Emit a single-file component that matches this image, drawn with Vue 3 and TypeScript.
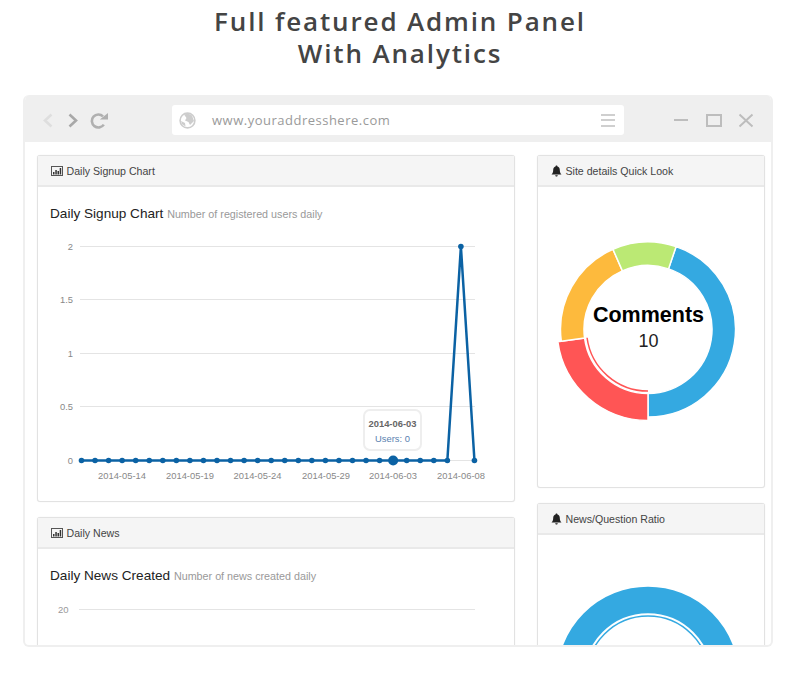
<template>
  <div class="page">
    <h1 class="title">Full featured Admin Panel<br />With Analytics</h1>

    <div class="browser">
      <div class="toolbar">
        <div class="nav">
          <svg width="14" height="18" viewBox="0 0 14 18"><path d="M11.500 3.500 L5 9.500 L11.500 15.500" fill="none" stroke="#dedede" stroke-width="2.600" /></svg>
          <svg width="14" height="18" viewBox="0 0 14 18"><path d="M3.500 3.500 L10 9.500 L3.500 15.500" fill="none" stroke="#a8a8a8" stroke-width="2.600" /></svg>
          <svg class="reload" width="20" height="18" viewBox="0 0 20 18">
            <path d="M14.800 13.600 A6.500 6.500 0 1 1 14 5.400" fill="none" stroke="#b0b0b0" stroke-width="2.600" />
            <path d="M10.800 8.600 L19 8.600 L19 2 Z" fill="#b0b0b0" />
          </svg>
        </div>
        <div class="address">
          <svg class="globe" width="17" height="17" viewBox="0 0 17 17">
            <circle cx="8.500" cy="8.500" r="7.400" fill="#fff" stroke="#cdcdcd" stroke-width="1.600" />
            <path d="M5 2.500 L9 1.500 L13 3.500 L15 9 L11 13 L9.500 10 L6 8.500 L7.500 6 Z" fill="#cdcdcd" />
            <path d="M2 9 L6 11 L6.500 14.500 L3 12 Z" fill="#cdcdcd" />
          </svg>
          <span class="url">www.youraddresshere.com</span>
          <div class="burger"><i></i><i></i><i></i></div>
        </div>
        <div class="window-btns">
          <svg width="16" height="16" viewBox="0 0 16 16"><path d="M0 8 H14" stroke="#bdbdbd" stroke-width="2" /></svg>
          <svg width="16" height="16" viewBox="0 0 16 16"><rect x="1" y="3" width="14" height="11" fill="none" stroke="#bdbdbd" stroke-width="2" /></svg>
          <svg width="16" height="16" viewBox="0 0 16 16"><path d="M1.500 2.500 L14.500 14.500 M14.500 2.500 L1.500 14.500" stroke="#bdbdbd" stroke-width="2" /></svg>
        </div>
      </div>

      <div class="content">
        <div class="col-left">
          <section class="panel panel-signup">
            <header class="panel-head">
              <svg class="ico" width="12" height="10" viewBox="0 0 12 10">
                <rect x="0.500" y="0.500" width="11" height="9" fill="none" stroke="#555" />
                <path d="M2 6h1.500v2.500h-1.500zM4.300 4h1.500v4.500h-1.500zM6.500 5h1.500v3.500h-1.500zM8.700 2h1.500v6.500h-1.500z" fill="#333" />
              </svg>
              Daily Signup Chart
            </header>
            <div class="panel-body">
              <div class="chart-title">Daily Signup Chart <small>Number of registered users daily</small></div>
              <svg class="chart" width="476" height="270" viewBox="0 0 476 270">
                <g v-for="g in gridLines" :key="g.label">
                  <line x1="42" x2="437" :y1="g.y" :y2="g.y" stroke="#e4e4e4" stroke-width="1.200" />
                  <text x="35" :y="g.y + 3.500" text-anchor="end" class="axis">{{ g.label }}</text>
                </g>
                <text v-for="d in dateLabels" :key="d.label" :x="d.x" y="259" text-anchor="middle" class="axis">{{ d.label }}</text>
                <polyline :points="linePoints" fill="none" stroke="#0b62a4" stroke-width="2.500" />
                <circle v-for="(p, i) in points" :key="i" :cx="p.x" :cy="p.y" :r="i === hoverIndex ? 5 : 2.800" fill="#0b62a4" />
              </svg>
              <div class="hover-tip">
                <b>2014-06-03</b>
                <span>Users: 0</span>
              </div>
            </div>
          </section>

          <section class="panel panel-news">
            <header class="panel-head">
              <svg class="ico" width="12" height="10" viewBox="0 0 12 10">
                <rect x="0.500" y="0.500" width="11" height="9" fill="none" stroke="#555" />
                <path d="M2 6h1.500v2.500h-1.500zM4.300 4h1.500v4.500h-1.500zM6.500 5h1.500v3.500h-1.500zM8.700 2h1.500v6.500h-1.500z" fill="#333" />
              </svg>
              Daily News
            </header>
            <div class="panel-body">
              <div class="chart-title">Daily News Created <small>Number of news created daily</small></div>
              <div class="news-grid">
                <span>20</span>
                <i></i>
              </div>
            </div>
          </section>
        </div>

        <div class="col-right">
          <section class="panel panel-donut">
            <header class="panel-head">
              <svg class="ico" width="11" height="12" viewBox="0 0 11 12">
                <path d="M5.500 0.500C6.200 0.500 6.500 1 6.500 1.500C8 2 8.800 3.200 8.800 5C8.800 7.500 9.500 8.500 10.500 9.500H0.500C1.500 8.500 2.200 7.500 2.200 5C2.200 3.200 3 2 4.500 1.500C4.500 1 4.800 0.500 5.500 0.500Z M4.200 10.200H6.800C6.700 11 6.200 11.500 5.500 11.500C4.800 11.500 4.300 11 4.200 10.200Z" fill="#222" />
              </svg>
              Site details Quick Look
            </header>
            <div class="donut-body">
              <svg width="226" height="270" viewBox="0 0 226 270">
                <path v-for="s in segments" :key="s.color" :d="s.d" :fill="s.color" stroke="#fff" stroke-width="1.500" />
                <path :d="redInner" fill="none" stroke="#ff5555" stroke-width="1.500" />
                <text x="110.500" y="135" text-anchor="middle" class="donut-label">Comments</text>
                <text x="110.500" y="160" text-anchor="middle" class="donut-value">10</text>
              </svg>
            </div>
          </section>

          <section class="panel panel-ratio">
            <header class="panel-head">
              <svg class="ico" width="11" height="12" viewBox="0 0 11 12">
                <path d="M5.500 0.500C6.200 0.500 6.500 1 6.500 1.500C8 2 8.800 3.200 8.800 5C8.800 7.500 9.500 8.500 10.500 9.500H0.500C1.500 8.500 2.200 7.500 2.200 5C2.200 3.200 3 2 4.500 1.500C4.500 1 4.800 0.500 5.500 0.500Z M4.200 10.200H6.800C6.700 11 6.200 11.500 5.500 11.500C4.800 11.500 4.300 11 4.200 10.200Z" fill="#222" />
              </svg>
              News/Question Ratio
            </header>
            <div class="ratio-body">
              <svg width="226" height="130" viewBox="0 0 226 130">
                <circle cx="110" cy="142.500" r="77.500" fill="none" stroke="#34a9e1" stroke-width="26.500" />
                <circle cx="110" cy="142.500" r="61.500" fill="none" stroke="#34a9e1" stroke-width="1.500" />
              </svg>
            </div>
          </section>
        </div>
      </div>
    </div>
  </div>
</template>

<script setup lang="ts">
const gridLines = [
  { label: '2', y: 26.5 },
  { label: '1.5', y: 79.5 },
  { label: '1', y: 133.5 },
  { label: '0.5', y: 186.5 },
  { label: '0', y: 240.5 }
]

// 30 daily points, only the second to last day has signups
const points = Array.from({ length: 30 }, (_, i) => ({
  x: 43.5 + i * 13.55,
  y: i === 28 ? 26.5 : 240.5
}))
const hoverIndex = 23
const linePoints = points.map((p) => `${p.x},${p.y}`).join(' ')

const dateLabels = [
  { label: '2014-05-14', x: 84 },
  { label: '2014-05-19', x: 152 },
  { label: '2014-05-24', x: 219.5 },
  { label: '2014-05-29', x: 288 },
  { label: '2014-06-03', x: 355 },
  { label: '2014-06-08', x: 423 }
]

const polar = (cx: number, cy: number, r: number, deg: number) => {
  const a = ((deg - 90) * Math.PI) / 180
  return `${(cx + r * Math.cos(a)).toFixed(2)} ${(cy + r * Math.sin(a)).toFixed(2)}`
}

const arc = (cx: number, cy: number, r0: number, r1: number, from: number, to: number) => {
  const large = to - from > 180 ? 1 : 0
  return `M${polar(cx, cy, r1, from)} A${r1} ${r1} 0 ${large} 1 ${polar(cx, cy, r1, to)} L${polar(cx, cy, r0, to)} A${r0} ${r0} 0 ${large} 0 ${polar(cx, cy, r0, from)} Z`
}

const cx = 110
const cy = 142.5
const segments = [
  { color: '#34a9e1', d: arc(cx, cy, 64, 87.5, 18.7, 180) },
  { color: '#ff5555', d: arc(cx, cy, 64, 91, 180, 262.3) },
  { color: '#fdba3d', d: arc(cx, cy, 64, 87.5, 262.3, 336.4) },
  { color: '#bbe974', d: arc(cx, cy, 64, 87.5, 336.4, 378.7) }
]

const redInner = `M${polar(cx, cy, 61.5, 180)} A61.5 61.5 0 0 1 ${polar(cx, cy, 61.5, 262.3)}`
</script>

<style>
body {
  margin: 0;
  background: #fff;
}
</style>

<style scoped>
.page {
  width: 800px;
  height: 700px;
  overflow: hidden;
  background: #fff;
  font-family: "Liberation Sans", Arial, sans-serif;
}

.title {
  margin: 0;
  padding-top: 5px;
  height: 95px;
  box-sizing: border-box;
  text-align: center;
  font-family: "Open Sans", sans-serif;
  font-size: 26px;
  font-weight: 600;
  line-height: 32px;
  letter-spacing: 1.85px;
  color: #444;
}

.browser {
  margin-left: 23px;
  width: 750px;
  height: 552px;
  box-sizing: border-box;
  border: 2px solid #efefef;
  border-top: 0;
  border-radius: 6px;
  overflow: hidden;
}

.toolbar {
  height: 47px;
  margin: 0 -2px;
  background: #efefef;
  display: flex;
  align-items: center;
  padding-left: 17px;
}

.nav {
  width: 132px;
  margin-top: 3px;
  display: flex;
  align-items: center;
  gap: 12px;
}

.reload {
  margin-left: -3px;
}

.address {
  width: 452px;
  height: 30px;
  margin-top: 3px;
  background: #fff;
  border-radius: 3px;
  display: flex;
  align-items: center;
  padding: 0 9px 0 7px;
  box-sizing: border-box;
}

.url {
  margin-left: 16px;
  flex: 1;
  font-family: "Open Sans", sans-serif;
  font-size: 13px;
  letter-spacing: 0.5px;
  color: #9a9a9a;
}

.burger {
  display: flex;
  flex-direction: column;
  gap: 3.5px;
}

.burger i {
  display: block;
  width: 14px;
  height: 2px;
  background: #cfcfcf;
}

.window-btns {
  margin-left: 50px;
  margin-top: 3px;
  display: flex;
  gap: 16px;
}

.content {
  display: flex;
  gap: 22px;
  padding: 13px 0 0 12px;
}

.col-left {
  width: 478px;
  flex: none;
  display: flex;
  flex-direction: column;
  gap: 15px;
}

.col-right {
  width: 228px;
  flex: none;
  display: flex;
  flex-direction: column;
  gap: 15px;
}

.panel {
  border: 1px solid #e2e2e2;
  border-radius: 3px;
  box-sizing: border-box;
  background: #fff;
  box-shadow: 0 0 1px rgba(0, 0, 0, 0.12);
  flex: none;
}

.panel-signup { height: 347px; }
.panel-news { height: 200px; }
.panel-donut { height: 333px; }
.panel-ratio { height: 200px; }

.panel-head {
  height: 31px;
  box-sizing: border-box;
  padding-left: 13px;
  display: flex;
  align-items: center;
  gap: 3.5px;
  background: #f5f5f5;
  border-bottom: 2px solid #e9e9e9;
  font-size: 10.6px;
  color: #444;
}

.panel-body {
  position: relative;
  padding: 19px 0 0 12px;
}

.chart-title {
  font-size: 13.6px;
  line-height: 16px;
  color: #222;
}

.chart-title small {
  font-size: 10.75px;
  color: #999;
}

.chart {
  display: block;
  margin-left: -12px;
  margin-top: -2px;
}

.axis {
  font-family: "Liberation Sans", Arial, sans-serif;
  font-size: 9.4px;
  fill: #888;
}

.hover-tip {
  position: absolute;
  left: 325px;
  top: 222px;
  width: 59px;
  height: 42px;
  box-sizing: border-box;
  padding-top: 2px;
  border: 2px solid #eee;
  border-radius: 7px;
  background: rgba(255, 255, 255, 0.85);
  display: flex;
  flex-direction: column;
  align-items: center;
  justify-content: center;
  gap: 5px;
  font-size: 9.4px;
  line-height: 10px;
}

.hover-tip b {
  color: #666;
}

.hover-tip span {
  color: #5a7fb0;
}

.news-grid {
  margin-top: 20px;
  display: flex;
  align-items: center;
  gap: 10px;
  font-size: 9.5px;
  color: #999;
}

.news-grid i {
  display: block;
  width: 396px;
  height: 1px;
  background: #e4e4e4;
}

.news-grid span {
  margin-left: 8px;
}

.donut-body svg,
.ratio-body svg {
  display: block;
}

.donut-label {
  font-family: "Liberation Sans", Arial, sans-serif;
  font-size: 21.5px;
  font-weight: bold;
  fill: #000;
}

.donut-value {
  font-family: "Liberation Sans", Arial, sans-serif;
  font-size: 18px;
  fill: #222;
}
</style>
